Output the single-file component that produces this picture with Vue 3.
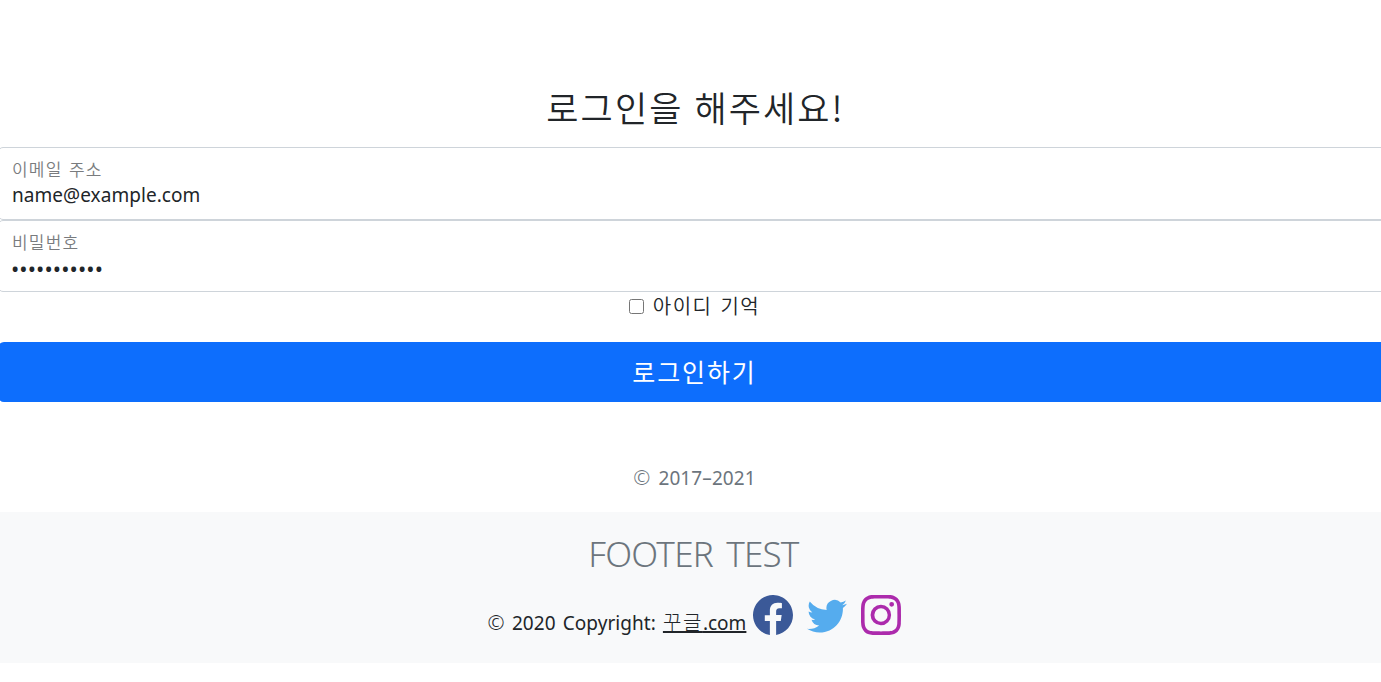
<script setup>
import { ref } from 'vue'

const email = ref('name@example.com')
const password = ref('•'.repeat(11))
const remember = ref(false)
</script>

<template>
  <div class="page">
    <main class="signin">
      <h1 class="title">로그인을 해주세요!</h1>
      <div class="field">
        <label class="label">이메일 주소</label>
        <div class="value">{{ email }}</div>
      </div>
      <div class="field">
        <label class="label">비밀번호</label>
        <div class="value dots">{{ password }}</div>
      </div>
      <label class="remember">
        <input v-model="remember" class="box" type="checkbox" />
        <span>아이디 기억</span>
      </label>
      <button class="submit" type="button"><span>로그인하기</span></button>
      <p class="years"><span class="mark">©</span> 2017–2021</p>
    </main>
    <footer class="footer">
      <h2 class="footer-title">FOOTER TEST</h2>
      <div class="footer-row">
        <span class="copy"><span class="mark">©</span> 2020 Copyright:</span>
        <a class="link"><span class="ko">꾸글</span>.com</a>
        <svg class="icon facebook" viewBox="0 0 16 16"><path d="M16 8.049c0-4.446-3.582-8.05-8-8.05C3.58 0-.002 3.603-.002 8.05c0 4.017 2.926 7.347 6.75 7.951v-5.625h-2.03V8.05H6.75V6.275c0-2.017 1.195-3.131 3.022-3.131.876 0 1.791.157 1.791.157v1.98h-1.009c-.993 0-1.303.621-1.303 1.258v1.51h2.218l-.354 2.326H9.25V16c3.824-.604 6.75-3.934 6.75-7.951z" /></svg>
        <svg class="icon twitter" viewBox="0 0 16 16"><path d="M5.026 15c6.038 0 9.341-5.003 9.341-9.334 0-.14 0-.282-.006-.422A6.685 6.685 0 0 0 16 3.542a6.658 6.658 0 0 1-1.889.518 3.301 3.301 0 0 0 1.447-1.817 6.533 6.533 0 0 1-2.087.793A3.286 3.286 0 0 0 7.875 6.03a9.325 9.325 0 0 1-6.767-3.429 3.289 3.289 0 0 0 1.018 4.382A3.323 3.323 0 0 1 .64 6.575v.045a3.288 3.288 0 0 0 2.632 3.218 3.203 3.203 0 0 1-.865.115 3.23 3.23 0 0 1-.614-.057 3.283 3.283 0 0 0 3.067 2.277A6.588 6.588 0 0 1 .78 13.58a6.32 6.32 0 0 1-.78-.045A9.344 9.344 0 0 0 5.026 15z" /></svg>
        <svg class="icon instagram" viewBox="0 0 16 16"><path d="M8 0C5.829 0 5.556.01 4.703.048 3.85.088 3.269.222 2.76.42a3.917 3.917 0 0 0-1.417.923A3.927 3.927 0 0 0 .42 2.76C.222 3.268.087 3.85.048 4.7.01 5.555 0 5.827 0 8.001c0 2.172.01 2.444.048 3.297.04.852.174 1.433.372 1.942.205.526.478.972.923 1.417.444.445.89.719 1.416.923.51.198 1.09.333 1.942.372C5.555 15.99 5.827 16 8 16s2.444-.01 3.298-.048c.851-.04 1.434-.174 1.943-.372a3.916 3.916 0 0 0 1.416-.923c.445-.445.718-.891.923-1.417.197-.509.332-1.09.372-1.942C15.99 10.445 16 10.173 16 8s-.01-2.445-.048-3.299c-.04-.851-.175-1.433-.372-1.941a3.926 3.926 0 0 0-.923-1.417A3.911 3.911 0 0 0 13.24.42c-.51-.198-1.092-.333-1.943-.372C10.443.01 10.172 0 7.998 0h.003zm-.717 1.442h.718c2.136 0 2.389.007 3.232.046.78.035 1.204.166 1.486.275.373.145.64.319.92.599.28.28.453.546.598.92.11.281.24.705.275 1.485.039.843.047 1.096.047 3.231s-.008 2.389-.047 3.232c-.035.78-.166 1.203-.275 1.485a2.47 2.47 0 0 1-.599.919c-.28.28-.546.453-.92.598-.28.11-.704.24-1.485.276-.843.038-1.096.047-3.232.047s-2.39-.009-3.233-.047c-.78-.036-1.203-.166-1.485-.276a2.478 2.478 0 0 1-.92-.598 2.48 2.48 0 0 1-.6-.92c-.109-.281-.24-.705-.275-1.485-.038-.843-.046-1.096-.046-3.233 0-2.136.008-2.388.046-3.231.036-.78.166-1.204.276-1.486.145-.373.319-.64.599-.92.28-.28.546-.453.92-.598.282-.11.705-.24 1.485-.276.738-.034 1.024-.044 2.515-.045v.002zm4.988 1.328a.96.96 0 1 0 0 1.92.96.96 0 0 0 0-1.92zm-4.27 1.122a4.109 4.109 0 1 0 0 8.217 4.109 4.109 0 0 0 0-8.217zm0 1.441a2.667 2.667 0 1 1 0 5.334 2.667 2.667 0 0 1 0-5.334z" /></svg>
      </div>
    </footer>
  </div>
</template>

<style>
body {
  overflow: hidden;
  background: #fff;
}
</style>

<style scoped>
.page {
  width: 1393px;
  margin-left: -2px;
  color: #212529;
  font-family: "Noto Sans", "Noto Sans CJK KR", sans-serif;
  font-size: 19px;
  font-weight: 400;
}

.signin {
  display: flex;
  flex-direction: column;
  height: 512px;
  padding-top: 86px;
  box-sizing: border-box;
}

.title {
  height: 42px;
  margin: 0 0 19px;
  padding-left: 2px;
  text-align: center;
  font-family: "Noto Sans CJK KR", sans-serif;
  font-size: 35px;
  font-weight: 350;
  line-height: 42px;
  letter-spacing: 2.1px;
  word-spacing: 1px;
}

.field {
  height: 73px;
  padding: 8px 13px 0;
  box-sizing: border-box;
  border: 1px solid #ced4da;
  border-radius: 5px;
}

.field + .field {
  height: 72px;
}

.label {
  display: block;
  height: 26px;
  color: #212529;
  opacity: 0.6;
  font-family: "Noto Sans CJK KR", sans-serif;
  font-size: 17px;
  font-weight: 350;
  line-height: 25px;
  letter-spacing: 1.2px;
  word-spacing: 1.5px;
}

.value {
  height: 27px;
  line-height: 27px;
  letter-spacing: 0.05px;
  white-space: nowrap;
}

.dots {
  margin-left: -1px;
  font-size: 22px;
  letter-spacing: 0.1px;
}

.remember {
  display: flex;
  align-items: center;
  justify-content: center;
  height: 26px;
  margin: 2px 0 22px;
  gap: 9px;
  font-family: "Noto Sans CJK KR", sans-serif;
  font-size: 20px;
  font-weight: 350;
  line-height: 26px;
  letter-spacing: 1.5px;
  word-spacing: 2px;
}

.remember span {
  margin-top: -2px;
}

.box {
  width: 15px;
  height: 15px;
  margin: -2px 0 0;
}

.submit {
  height: 60px;
  padding: 0 0 2px;
  border: 0;
  border-radius: 6px;
  background: #0d6efd;
  color: #fff;
  font-family: "Noto Sans CJK KR", sans-serif;
  font-size: 25px;
  line-height: 58px;
  letter-spacing: 1.9px;
}

.years {
  margin: 61px 0 0;
  color: #6c757d;
  line-height: 30px;
  letter-spacing: 0.1px;
  text-align: center;
  word-spacing: 3px;
}

.mark {
  font-size: 20.5px;
  font-weight: 300;
  line-height: 1;
}

.footer {
  height: 151px;
  padding-top: 20px;
  box-sizing: border-box;
  background: #f8f9fa;
}

.footer-title {
  margin: 0;
  padding-right: 2px;
  color: #6c757d;
  font-size: 35px;
  font-weight: 350;
  line-height: 44px;
  letter-spacing: -0.8px;
  word-spacing: 5px;
  text-align: center;
}

.footer-row {
  display: flex;
  justify-content: center;
  height: 40px;
  margin-top: 19px;
  line-height: 56px;
}

.copy {
  letter-spacing: 0.05px;
  word-spacing: 2.2px;
}

.link {
  height: 40px;
  margin-left: 7px;
  text-decoration: underline;
  text-decoration-thickness: 2px;
}

.ko {
  font-size: 20px;
  font-weight: 300;
  letter-spacing: 1.6px;
}

.icon {
  flex: none;
  width: 40px;
  height: 40px;
  margin-left: 14px;
}

.facebook {
  margin-left: 7px;
  fill: #3b5998;
}

.twitter {
  fill: #55acee;
}

.instagram {
  fill: #ac2bac;
}
</style>
